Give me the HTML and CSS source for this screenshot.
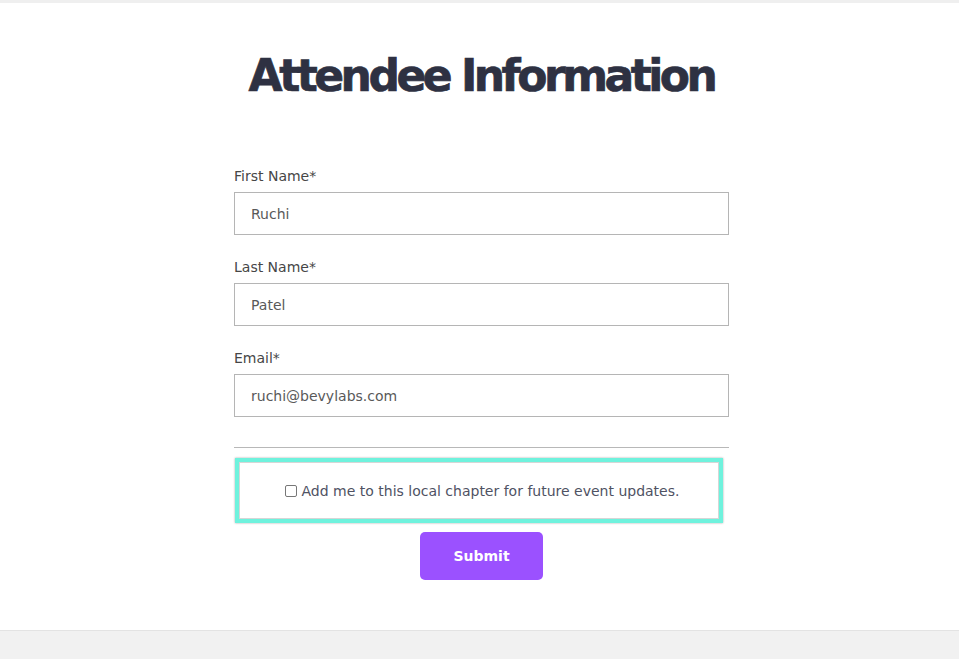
FILE: index.html
```html
<!DOCTYPE html>
<html lang="en">
<head>
<meta charset="utf-8">
<title>Attendee Information</title>
<link rel="stylesheet" href="styles.css">
</head>
<body>
<div class="topbar"></div>
<main class="page">
  <h1 class="title">Attendee Information</h1>
  <form class="form">
    <div class="field">
      <label class="label" for="first">First Name*</label>
      <input class="input" id="first" type="text" value="Ruchi">
    </div>
    <div class="field">
      <label class="label" for="last">Last Name*</label>
      <input class="input" id="last" type="text" value="Patel">
    </div>
    <div class="field">
      <label class="label" for="email">Email*</label>
      <input class="input" id="email" type="text" value="ruchi@bevylabs.com">
    </div>
    <hr class="divider">
    <div class="optin">
      <label class="optin-label"><span class="check"></span>Add me to this local chapter for future event updates.</label>
    </div>
    <div class="actions">
      <button class="submit" type="button">Submit</button>
    </div>
  </form>
</main>
<footer class="footer"></footer>
</body>
</html>
```
FILE: styles.css
```css
html, body { margin: 0; padding: 0; }
body {
  background: #ffffff;
  font-family: "DejaVu Sans", "Open Sans", sans-serif;
  color: #3d3d3d;
  height: 659px;
  display: flex;
  flex-direction: column;
}
.topbar { height: 3px; background: #efefef; flex: none; }
.page {
  flex: 1;
  padding-left: 4px;
  display: flex;
  flex-direction: column;
  align-items: center;
}
.title {
  margin: 48px 0 0;
  font-family: "DejaVu Sans", sans-serif;
  font-weight: 700;
  font-size: 44px;
  line-height: 50px;
  letter-spacing: -3.5px;
  -webkit-text-stroke: 0.7px #2e3142;
  color: #2e3142;
}
.form {
  width: 495px;
  margin-top: 67px;
  display: flex;
  flex-direction: column;
}
.field { display: flex; flex-direction: column; margin-bottom: 24px; }
.label {
  font-size: 14px;
  line-height: 17px;
  color: #464646;
  margin-bottom: 7px;
}
.input {
  box-sizing: border-box;
  height: 43px;
  border: 1px solid #b5b5b5;
  border-radius: 0;
  padding: 0 16px;
  font-family: "DejaVu Sans", sans-serif;
  font-size: 14px;
  color: #595959;
  background: #fff;
  outline: none;
}
.divider {
  margin: 6px 0 0;
  border: 0;
  border-top: 1px solid #b8b8b8;
  height: 0;
}
.optin {
  margin-top: 10px;
  width: 488px;
  box-sizing: border-box;
  height: 65px;
  border: 4px solid #6ff2dd;
  box-shadow: 0 0 2px rgba(0,0,0,0.35), inset 0 0 0 1px #d6d6d6;
  display: flex;
  align-items: center;
  justify-content: center;
  margin-left: 1px;
}
.optin-label {
  font-size: 14px;
  color: #4f5263;
  display: flex;
  align-items: center;
  padding-left: 6px;
}
.check {
  width: 10px;
  height: 10px;
  border: 1px solid #777;
  border-radius: 2px;
  margin-right: 5px;
  background: #fff;
}
.actions { display: flex; justify-content: center; margin-top: 9px; }
.submit {
  width: 123px;
  height: 48px;
  border: 0;
  border-radius: 5px;
  background: #9b51ff;
  color: #ffffff;
  font-family: "DejaVu Sans", sans-serif;
  font-weight: 700;
  font-size: 14px;
}
.footer {
  flex: none;
  height: 28px;
  background: #f1f1f1;
  border-top: 1px solid #e3e3e3;
}
```
